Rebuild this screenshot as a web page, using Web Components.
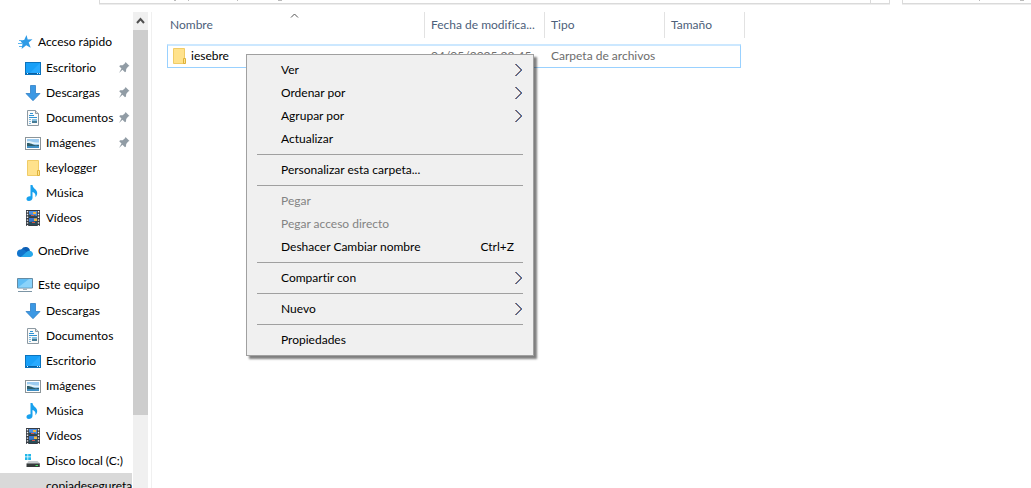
<!DOCTYPE html>
<html lang="es">
<head>
<meta charset="utf-8">
<meta name="viewport" content="width=device-width, initial-scale=1">
<title>Explorador de archivos</title>
<style>
html, body { height: 100%; }
body { margin: 0; overflow: hidden; background: #fff; color: #000; font: 12px/16px Lato, "Noto Sans", sans-serif; font-variant-ligatures: none; }
</style>
</head>
<body>
<file-explorer>
  <explorer-bars slot="bars"></explorer-bars>
  <nav-tree slot="nav">
    <nav-group>
      <nav-item slot="root" icon="star">Acceso rápido</nav-item>
      <nav-item icon="desktop" pinned>Escritorio</nav-item>
      <nav-item icon="down" pinned>Descargas</nav-item>
      <nav-item icon="doc" pinned>Documentos</nav-item>
      <nav-item icon="image" pinned>Imágenes</nav-item>
      <nav-item icon="folder">keylogger</nav-item>
      <nav-item icon="music">Música</nav-item>
      <nav-item icon="video">Vídeos</nav-item>
    </nav-group>
    <nav-group>
      <nav-item slot="root" icon="cloud">OneDrive</nav-item>
    </nav-group>
    <nav-group>
      <nav-item slot="root" icon="pc">Este equipo</nav-item>
      <nav-item icon="down">Descargas</nav-item>
      <nav-item icon="doc">Documentos</nav-item>
      <nav-item icon="desktop">Escritorio</nav-item>
      <nav-item icon="image">Imágenes</nav-item>
      <nav-item icon="music">Música</nav-item>
      <nav-item icon="video">Vídeos</nav-item>
      <nav-item icon="disk">Disco local (C:)</nav-item>
      <nav-item icon="net" selected>copiadesegureta</nav-item>
    </nav-group>
  </nav-tree>
  <side-scrollbar slot="scroll"></side-scrollbar>
  <file-list slot="files"></file-list>
  <context-menu slot="menu">
    <menu-item submenu>Ver</menu-item>
    <menu-item submenu>Ordenar por</menu-item>
    <menu-item submenu>Agrupar por</menu-item>
    <menu-item>Actualizar</menu-item>
    <menu-separator></menu-separator>
    <menu-item>Personalizar esta carpeta...</menu-item>
    <menu-separator></menu-separator>
    <menu-item disabled>Pegar</menu-item>
    <menu-item disabled>Pegar acceso directo</menu-item>
    <menu-item shortcut="Ctrl+Z">Deshacer Cambiar nombre</menu-item>
    <menu-separator></menu-separator>
    <menu-item submenu>Compartir con</menu-item>
    <menu-separator></menu-separator>
    <menu-item submenu>Nuevo</menu-item>
    <menu-separator></menu-separator>
    <menu-item>Propiedades</menu-item>
  </context-menu>
</file-explorer>

<script>
const svg = (body, w = 16, h = 16) =>
  `<svg width="${w}" height="${h}" viewBox="0 0 ${w} ${h}" aria-hidden="true">${body}</svg>`;

const icons = {
  star: svg('<path d="M9.500 1l1.200 4.400 4.800-.2-3.800 3.200 2 5.400-4.500-2.600L4.600 15l.9-5.200L3 6.300l4.200-.3z" fill="#2f9be6"/><path d="M2 6.500h4M1 9.500h4.500M2 12.500h3" stroke="#5bb5ef"/>'),
  desktop: svg('<rect x=".5" y="2.500" width="15" height="12" fill="#18a0f8" stroke="#0b73bd"/><path d="M15 3v10H5z" fill="#28aaff"/><path d="M1 13.500h14" stroke="#0a5fa0"/><path d="M2 13.500h1M12 13.500h1M14 13.500h1" stroke="#d8f1ff"/>'),
  down: svg('<path d="M5.500.5h5v8h4.500L8 15.700 1 8.500h4.500z" fill="#3b98e4" stroke="#2e7fc7" stroke-width=".8"/>'),
  doc: svg('<path d="M2.500.5h8l3 3v12h-11z" fill="#fafafa" stroke="#8d9aa3"/><path d="M10.500.5v3h3" fill="#ddd" stroke="#8d9aa3"/><path d="M5 3.500h3M4 5.500h5M4 7.500h8" stroke="#2f93d3"/><path d="M4 9.500h2M4 11.500h2M4 13.500h2" stroke="#7fb9dd"/><path d="M7 9h5v4H7z" fill="#86bfe0"/><path d="M7 11h5v2H7z" fill="#447b95"/>'),
  image: svg('<rect x=".5" y="2.500" width="15" height="12" fill="#fff" stroke="#8c9599"/><path d="M2 4h12v9H2z" fill="#9bcbf0"/><path d="M2 6.500c2-1 3-.5 4 0s4 1 8 1V9H2z" fill="#e4f3fa"/><path d="M2 8c3 0 4 .5 6 1.500s4 .500 6 .5v1H2z" fill="#2f5f6c"/><path d="M2 11h12v2H2z" fill="#3f8fc4"/>'),
  folder: svg('<path d="M2.500.5h11v15h-11z" fill="#ffe28c" stroke="#f0cc67"/><path d="M12.500 10.500h2v5h-2z" fill="#ffe391" stroke="#deb23a"/>'),
  music: svg('<path d="M7.500 0c.3 3.500 4.700 4.500 4.700 8 0 2-1 3.500-1.800 4.200.6-3.700-1.200-4.700-2.900-5.200v6c0 1.800-1.900 3-3.600 3S1.500 15 1.500 13.700c0-1.600 2-2.900 4-2.500V0z" fill="#18a1ee"/>'),
  video: svg('<path d="M1 0h14v16H1z" fill="#363b43"/><path d="M4 1h8v6H4z" fill="#4f8fdf"/><path d="M4 8h8v7H4z" fill="#3977cf"/><path d="M4 4.500l4 .5 4 1v1H4zM4 12l8-1v4H4z" fill="#284c58"/><path d="M8 2h3v2H8zM9 8.500h3V11H9z" fill="#f4b63b"/><path d="M6 5h3v1H6zM7 12h3v1H7z" fill="#d6504a"/><path d="M2.500 1v15M13.500 1v15" stroke="#f5f5f5" stroke-width="1.400" stroke-dasharray="1.400 1.400"/>'),
  cloud: svg('<path d="M4.500 6.500a4.600 4.600 0 0 1 8.500 1L7 13 2 10z" fill="#0d5fb5"/><path d="M3.500 14A3.700 3.700 0 0 1 4 6.500c2-.5 3.500.5 4.500 1.500L14 13z" fill="#1275cd"/><path d="M4 14l6-5.500c2-1.500 5.500-.7 6 2.300.2 2-1.200 3.200-3 3.200z" fill="#28a8ea"/>'),
  pc: svg('<path d="M.5 1.500h15v9.500H.5z" fill="#5fbdf5" stroke="#668ba3"/><path d="M1 10.500L12 2h3v8.500z" fill="#8ad3fb"/><path d="M6 11.500h4v1.500H6z" fill="#a5b4bf"/><path d="M1 14.500h14" stroke="#7c95a5"/>'),
  disk: svg('<path d="M0 1h2.500v2.500H0zM3.200 1H6v2.500H3.200zM0 4.300h2.500V7H0zM3.200 4.300H6V7H3.200z" fill="#20b7ea"/><path d="M3.500 8h9l2.500 2.500v.5H1.500z" fill="#c8cccf"/><path d="M1.500 10.500h13.300V14H1.500z" fill="#363a3b"/><path d="M10.500 12.500h2.500" stroke="#45e065"/>'),
  net: svg('<path d="M8 10h5l2 2v1H4z" fill="#c3c7c9"/><path d="M3 13h12v3H3z" fill="#8a9093"/>'),
  pin: svg('<path d="M7.500 1l4 4-1.300.6-2 2.400-.2 2.500-1 .8-2.500-2.500L1 12l2.500-4.500L1.200 5.200l1-.9 2.500-.1L7 2.300z" fill="#919ca5"/>', 12, 13)
};

function define(name, markup, setup) {
  const template = document.createElement('template');
  template.innerHTML = markup;
  customElements.define(name, class extends HTMLElement {
    connectedCallback() {
      if (this.shadowRoot) return;
      this.attachShadow({ mode: 'open' }).append(template.content.cloneNode(true));
      if (setup) setup(this, this.shadowRoot);
    }
  });
}

define('file-explorer', `
<style>
:host { display: grid; grid-template: auto minmax(0, 1fr) / 133px 15px minmax(0, 1fr); height: 100vh; row-gap: 7px; overflow: hidden; position: relative; }
header { grid-column: 1 / -1; }
nav { overflow: hidden; }
main { margin-left: 3px; border-left: 1px solid #f0f0f0; min-width: 0; }
</style>
<header><slot name="bars"></slot></header>
<nav aria-label="Panel de navegación"><slot name="nav"></slot></nav>
<slot name="scroll"></slot>
<main><slot name="files"></slot></main>
<slot name="menu"></slot>`);

define('explorer-bars', `
<style>
:host { display: flex; gap: 12px; padding-left: 99px; }
div { height: 3px; border: solid #dadada; border-width: 0 1px 1px; box-shadow: 0 1px #ededed; margin-bottom: 1px; display: flex; }
.address { flex: 1; }
.address i { margin-left: auto; width: 18px; border-left: 1px solid #dadada; }
.search { width: 128px; border-right: 0; }
svg { display: block; }
</style>
<div class="address"><svg width="200" height="3" aria-hidden="true"><path d="M74 .5h2M88 .5h1M137 .5h1M178 .5h4" stroke="#bbb"/></svg><i></i></div>
<div class="search"><svg width="127" height="3" aria-hidden="true"><path d="M76 .5h1M117 .5h4" stroke="#bbb"/></svg></div>`);

define('nav-tree', `
<style>:host { display: flex; flex-direction: column; gap: 8px; padding-top: 17px; }</style><slot></slot>`);

define('nav-group', `
<style>
:host { display: block; }
.root { display: grid; height: 26px; --indent: 17px; }
.children { --indent: 25px; }
</style>
<div class="root"><slot name="root"></slot></div><div class="children"><slot></slot></div>`);

define('nav-item', `
<style>
:host { display: block; }
a { display: flex; align-items: center; gap: 5px; height: 25px; padding: 0 3px 0 var(--indent); box-sizing: border-box; color: inherit; text-decoration: none; white-space: nowrap; overflow: hidden; }
:host([slot="root"]) a { height: 26px; }
:host([selected]) a { background: #d9d9d9; margin-right: 1px; }
svg { flex: none; display: block; }
.pin { margin-left: auto; }
</style>
<a href="#"><span class="icon"></span><span><slot></slot></span></a>`, (host, root) => {
  root.querySelector('.icon').innerHTML = icons[host.getAttribute('icon')];
  if (host.hasAttribute('pinned')) {
    root.querySelector('a').insertAdjacentHTML('beforeend', '<span class="pin">' + icons.pin + '</span>');
  }
});

define('side-scrollbar', `
<style>
:host { display: flex; flex-direction: column; background: #f0f0f0; }
button { height: 18px; padding: 0; border: 0; background: #f0f0f0; display: grid; place-items: center; }
.track { flex: 1; }
.thumb { height: 84%; background: #cdcdcd; }
</style>
<button type="button" aria-label="Desplazar hacia arriba">${svg('<path d="M1 6l3.500-4L8 6" fill="none" stroke="#505050" stroke-width="2"/>', 9, 8)}</button>
<div class="track"><div class="thumb"></div></div>`);

define('file-list', `
<style>
:host { display: block; padding-left: 15px; }
table { width: 578px; table-layout: fixed; border-spacing: 0; }
col.name { width: 258px; } col.mid { width: 120px; } col.size { width: 80px; }
th { position: relative; height: 26px; padding: 0 6px; box-sizing: border-box; border-right: 1px solid #e2e2e2; text-align: left; font-weight: 400; color: #4c607a; white-space: nowrap; }
th:first-child { padding-left: 3px; }
th svg { position: absolute; top: 0; left: 50%; margin-left: -6px; }
tr.file { position: relative; }
tr.file::after { content: ""; position: absolute; inset: 6px 4px 0 0; border: 1px solid #99d1ff; border-top: 2px solid #cce8ff; }
td { height: 30px; padding: 6px 6px 0; box-sizing: border-box; color: #6d6d6d; white-space: nowrap; }
td:first-child { padding-left: 4px; color: #000; }
.file-name { display: flex; align-items: center; gap: 4px; }
.file-name svg { display: block; }
</style>
<table>
<colgroup><col class="name"><col class="mid"><col class="mid"><col class="size"></colgroup>
<thead><tr><th>Nombre${svg('<path d="M1 5.500L4.500 2 8 5.500" fill="none" stroke="#555"/>', 9, 7)}</th><th>Fecha de modifica...</th><th>Tipo</th><th>Tamaño</th></tr></thead>
<tbody><tr class="file"><td><span class="file-name">${icons.folder}<span>iesebre</span></span></td><td>04/05/2025 22:45</td><td>Carpeta de archivos</td><td></td></tr></tbody>
</table>`);

define('context-menu', `
<style>
:host { display: block; position: absolute; left: 246px; top: 54px; width: 288px; box-sizing: border-box; padding: 3px 0 4px; border: 1px solid #a0a0a0; background: #f0f0f0; box-shadow: 3px 3px 2px rgba(0, 0, 0, .5); z-index: 1; }
</style><div role="menu"><slot></slot></div>`);

define('menu-separator', `
<style>:host { display: block; height: 1px; margin: 4px 10px 3px; background: #a0a0a0; }</style>`,
  host => host.setAttribute('role', 'separator'));

define('menu-item', `
<style>
:host { display: block; }
button { display: flex; align-items: center; width: 100%; height: 23px; padding: 0 10px 0 34px; border: 0; background: none; color: #000; font: inherit; text-align: left; white-space: nowrap; }
button:disabled { color: #838383; }
svg, .shortcut { margin-left: auto; }
.shortcut { padding-right: 9px; }
</style>
<button type="button" role="menuitem"><span><slot></slot></span></button>`, (host, root) => {
  const button = root.querySelector('button');
  button.disabled = host.hasAttribute('disabled');
  if (host.hasAttribute('submenu')) {
    button.insertAdjacentHTML('beforeend', svg('<g fill="none"><path d="M1 1l6 6-6 6" stroke="#d39a78"/><path d="M2 1l6 6-6 6" stroke="#5b97dc"/><path d="M1.500 1l6 6-6 6" stroke="#2b2b4a" stroke-width=".8"/></g>', 9, 14));
  }
  if (host.hasAttribute('shortcut')) {
    const key = document.createElement('span');
    key.className = 'shortcut';
    key.textContent = host.getAttribute('shortcut');
    button.append(key);
  }
});
</script>
</body>
</html>
